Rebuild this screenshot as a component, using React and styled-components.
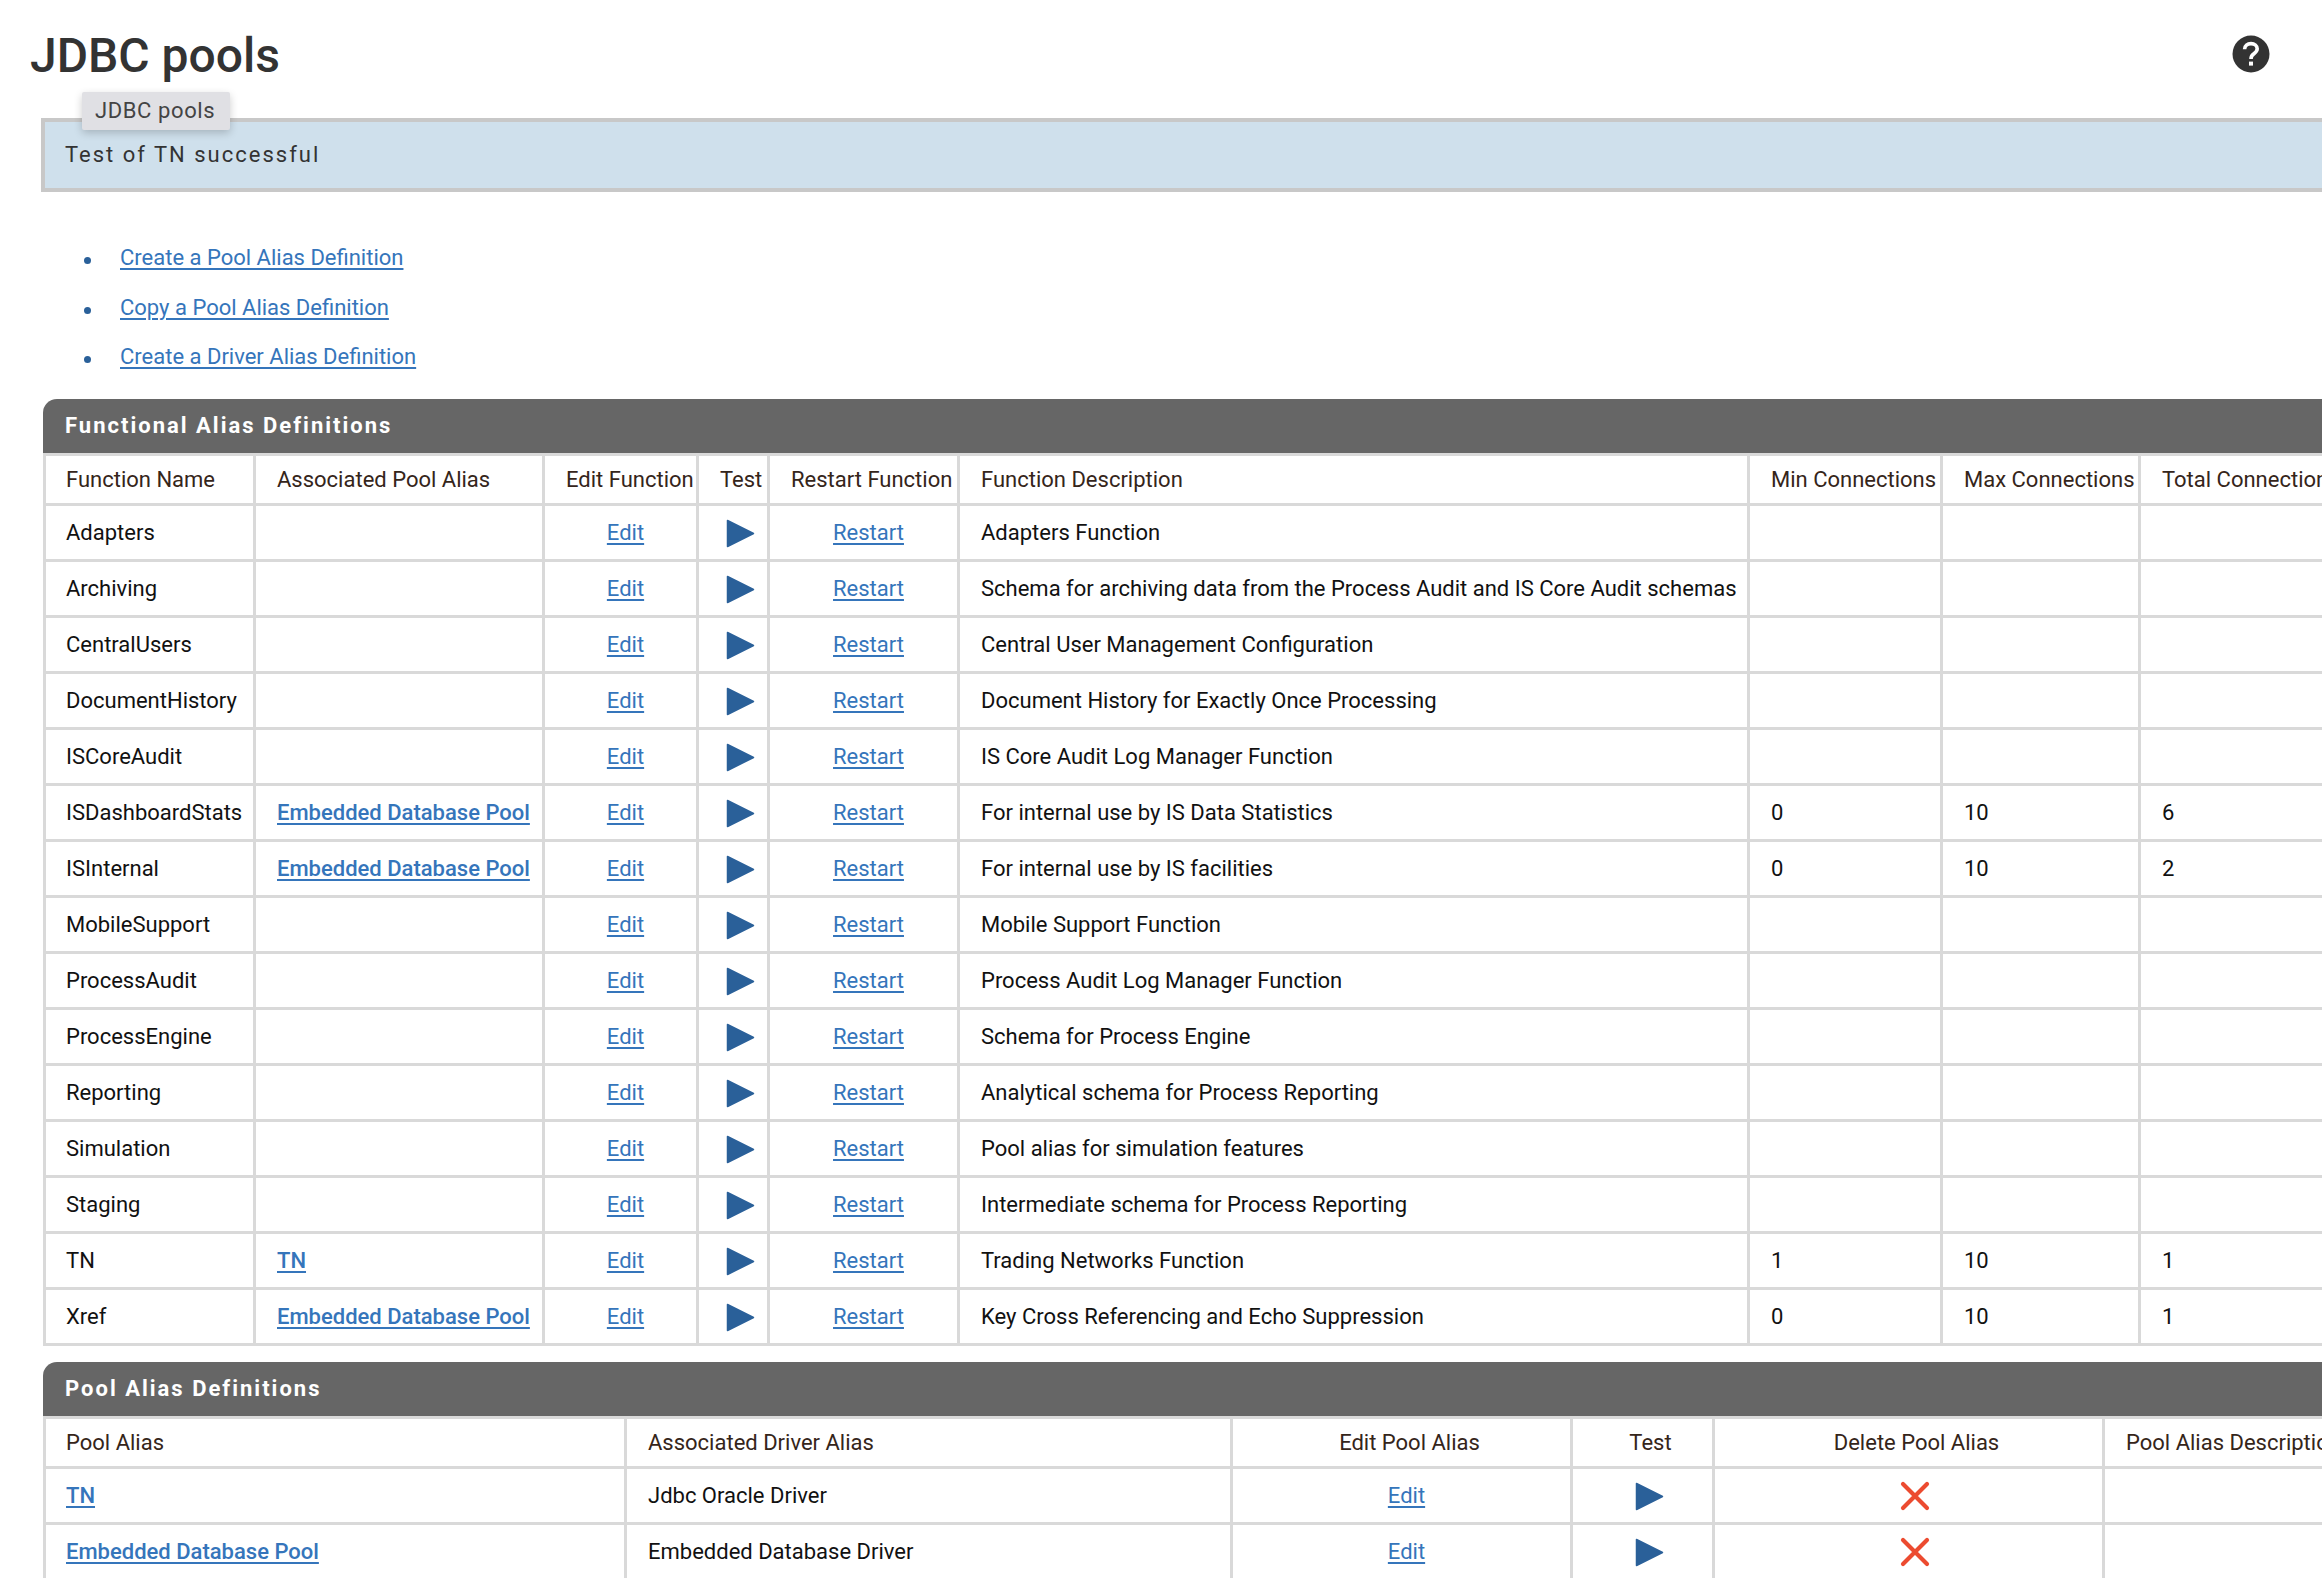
import React from 'react'
import styled, { createGlobalStyle } from 'styled-components'

const GlobalStyle = createGlobalStyle`
    html, body {
        margin: 0;
        padding: 0;
        background: #ffffff;
        overflow: hidden;
    }
    body {
        font-family: Roboto, "Liberation Sans", sans-serif;
    }
`

const functionRows = [
    { name: 'Adapters', description: 'Adapters Function' },
    { name: 'Archiving', description: 'Schema for archiving data from the Process Audit and IS Core Audit schemas' },
    { name: 'CentralUsers', description: 'Central User Management Configuration' },
    { name: 'DocumentHistory', description: 'Document History for Exactly Once Processing' },
    { name: 'ISCoreAudit', description: 'IS Core Audit Log Manager Function' },
    { name: 'ISDashboardStats', pool: 'Embedded Database Pool', description: 'For internal use by IS Data Statistics', min: 0, max: 10, total: 6 },
    { name: 'ISInternal', pool: 'Embedded Database Pool', description: 'For internal use by IS facilities', min: 0, max: 10, total: 2 },
    { name: 'MobileSupport', description: 'Mobile Support Function' },
    { name: 'ProcessAudit', description: 'Process Audit Log Manager Function' },
    { name: 'ProcessEngine', description: 'Schema for Process Engine' },
    { name: 'Reporting', description: 'Analytical schema for Process Reporting' },
    { name: 'Simulation', description: 'Pool alias for simulation features' },
    { name: 'Staging', description: 'Intermediate schema for Process Reporting' },
    { name: 'TN', pool: 'TN', description: 'Trading Networks Function', min: 1, max: 10, total: 1 },
    { name: 'Xref', pool: 'Embedded Database Pool', description: 'Key Cross Referencing and Echo Suppression', min: 0, max: 10, total: 1 },
]

const poolRows = [
    { alias: 'TN', driver: 'Jdbc Oracle Driver' },
    { alias: 'Embedded Database Pool', driver: 'Embedded Database Driver' },
]

const functionCols = [210, 289, 154, 71, 190, 790, 193, 198, 320]
const poolCols = [581, 606, 340, 142, 390, 400]

function PlayIcon() {
    return (
        <PlaySvg width="30" height="29" viewBox="0 0 30 29">
            <path d="M2.5 1.5 L28.5 14.5 L2.5 27.5 Z" fill="#2a6099" stroke="#2a6099" strokeWidth="1.5" strokeLinejoin="round" />
        </PlaySvg>
    )
}

function DeleteIcon() {
    return (
        <IconSvg width="32" height="30" viewBox="0 0 32 30">
            <path d="M4 3 L28 27 M28 3 L4 27" stroke="#ec4b30" strokeWidth="4.2" strokeLinecap="round" fill="none" />
        </IconSvg>
    )
}

function HelpIcon() {
    return (
        <HelpSvg width="38" height="38" viewBox="0 0 38 38">
            <circle cx="19" cy="19" r="18.5" fill="#333333" />
            <path d="M12.6 14.2 C12.6 10.6 15.4 8.6 19 8.6 C22.6 8.6 25.2 10.8 25.2 13.8 C25.2 16.4 23.4 17.6 21.6 19 C20 20.2 19 21 19 24" stroke="#ffffff" strokeWidth="3.6" fill="none" />
            <rect x="17" y="26.6" width="4" height="4" fill="#ffffff" />
        </HelpSvg>
    )
}

export default function App() {
    return (
        <Page>
            <GlobalStyle />
            <TitleBar>
                <Title>JDBC pools</Title>
                <HelpIcon />
            </TitleBar>

            <Message>
                <Tooltip>JDBC pools</Tooltip>
                Test of TN successful
            </Message>

            <ActionList>
                <li><Link href="#">Create a Pool Alias Definition</Link></li>
                <li><Link href="#">Copy a Pool Alias Definition</Link></li>
                <li><Link href="#">Create a Driver Alias Definition</Link></li>
            </ActionList>

            <Section>
                <SectionHead>Functional Alias Definitions</SectionHead>
                <Table>
                    <colgroup>
                        {functionCols.map((w, i) => <col key={i} width={w} />)}
                    </colgroup>
                    <thead>
                        <tr>
                            <Th>Function Name</Th>
                            <Th>Associated Pool Alias</Th>
                            <Th>Edit Function</Th>
                            <Th>Test</Th>
                            <Th>Restart Function</Th>
                            <Th>Function Description</Th>
                            <Th>Min Connections</Th>
                            <Th>Max Connections</Th>
                            <Th>Total Connections</Th>
                        </tr>
                    </thead>
                    <tbody>
                        {functionRows.map(row => (
                            <tr key={row.name}>
                                <Td>{row.name}</Td>
                                <Td>{row.pool ? <StrongLink href="#">{row.pool}</StrongLink> : null}</Td>
                                <Td $center="10px"><Link href="#">Edit</Link></Td>
                                <Td $center="13px"><PlayIcon /></Td>
                                <Td $center="10px"><Link href="#">Restart</Link></Td>
                                <Td>{row.description}</Td>
                                <Td>{row.min}</Td>
                                <Td>{row.max}</Td>
                                <Td>{row.total}</Td>
                            </tr>
                        ))}
                    </tbody>
                </Table>
            </Section>

            <Section $second>
                <SectionHead>Pool Alias Definitions</SectionHead>
                <Table>
                    <colgroup>
                        {poolCols.map((w, i) => <col key={i} width={w} />)}
                    </colgroup>
                    <thead>
                        <tr>
                            <Th>Pool Alias</Th>
                            <Th>Associated Driver Alias</Th>
                            <Th $center="16px">Edit Pool Alias</Th>
                            <Th $center="16px">Test</Th>
                            <Th $center="16px">Delete Pool Alias</Th>
                            <Th>Pool Alias Description</Th>
                        </tr>
                    </thead>
                    <tbody>
                        {poolRows.map(row => (
                            <tr key={row.alias}>
                                <Td><StrongLink href="#">{row.alias}</StrongLink></Td>
                                <Td>{row.driver}</Td>
                                <Td $center="10px"><Link href="#">Edit</Link></Td>
                                <Td $center="13px"><PlayIcon /></Td>
                                <Td $center="13px"><DeleteIcon /></Td>
                                <Td />
                            </tr>
                        ))}
                    </tbody>
                </Table>
            </Section>
        </Page>
    )
}

const Page = styled.div`
    width: 2322px;
    height: 1578px;
    overflow: hidden;
    padding-left: 43px;
    box-sizing: border-box;
`

const TitleBar = styled.div`
    display: flex;
    justify-content: space-between;
    align-items: center;
    height: 118px;
    margin-left: -13px;
    padding-right: 52px;
    padding-bottom: 8px;
    box-sizing: border-box;
`

const Title = styled.h1`
    margin: 0;
    padding-top: 2px;
    font-size: 48px;
    font-weight: 500;
    color: #333333;
    line-height: 60px;
`

const HelpSvg = styled.svg`
    display: block;
    margin-bottom: 2px;
`

const Message = styled.div`
    position: relative;
    width: 2400px;
    height: 74px;
    margin-left: -2px;
    padding: 20px 0 0 20px;
    box-sizing: border-box;
    background: #cfe0ec;
    border-top: 4px solid #c8c8c8;
    border-bottom: 4px solid #c8c8c8;
    border-left: 4px solid #c8c8c8;
    font-size: 22px;
    letter-spacing: 2px;
    line-height: 26px;
    color: #333333;
`

const Tooltip = styled.div`
    position: absolute;
    left: 37px;
    top: -30px;
    width: 148px;
    height: 38px;
    box-sizing: border-box;
    padding-left: 13px;
    background: #e0e0e4;
    border-radius: 2px;
    box-shadow: 0 3px 8px rgba(0, 0, 0, 0.2);
    font-size: 22px;
    line-height: 38px;
    letter-spacing: 0.6px;
    color: #444444;
`

const ActionList = styled.ul`
    margin: 0;
    padding: 41px 0 0 77px;
    height: 207px;
    box-sizing: border-box;
    list-style: none;
    font-size: 22px;
    line-height: 49.5px;

    li {
        position: relative;
    }

    li::before {
        content: '';
        position: absolute;
        left: -36px;
        top: 24px;
        width: 7px;
        height: 7px;
        border-radius: 50%;
        background: #2a6099;
    }
`

const Link = styled.a`
    color: #3575bb;
    text-decoration: underline;
    text-decoration-thickness: 2px;
    text-underline-offset: 3px;
`

const StrongLink = styled(Link)`
    font-weight: 500;
`

const Section = styled.section`
    width: 2400px;
    margin-top: ${props => (props.$second ? '16px' : '0')};
`

const SectionHead = styled.div`
    height: 54px;
    padding-left: 22px;
    background: #666666;
    border-top-left-radius: 14px;
    color: #ffffff;
    font-size: 22px;
    font-weight: 700;
    letter-spacing: 2px;
    line-height: 54px;
`

const Table = styled.table`
    table-layout: fixed;
    width: 100%;
    border-collapse: collapse;
    font-size: 22px;
`

const Th = styled.th`
    height: 50px;
    padding: 0 0 0 ${props => props.$center || '21px'};
    border: 3px solid #d9d9d9;
    box-sizing: border-box;
    text-align: ${props => (props.$center ? 'center' : 'left')};
    font-weight: 400;
    color: #35251a;
    white-space: nowrap;
    overflow: hidden;

    &:first-child {
        padding-left: 20px;
    }
`

const Td = styled.td`
    height: 56px;
    padding: 0 0 0 ${props => props.$center || '21px'};
    border: 3px solid #d9d9d9;
    box-sizing: border-box;
    text-align: ${props => (props.$center ? 'center' : 'left')};
    color: #111111;
    white-space: nowrap;

    &:first-child {
        padding-left: 20px;
    }
`

const IconSvg = styled.svg`
    display: inline-block;
    vertical-align: middle;
`

const PlaySvg = styled(IconSvg)`
    margin-top: 2px;
`
